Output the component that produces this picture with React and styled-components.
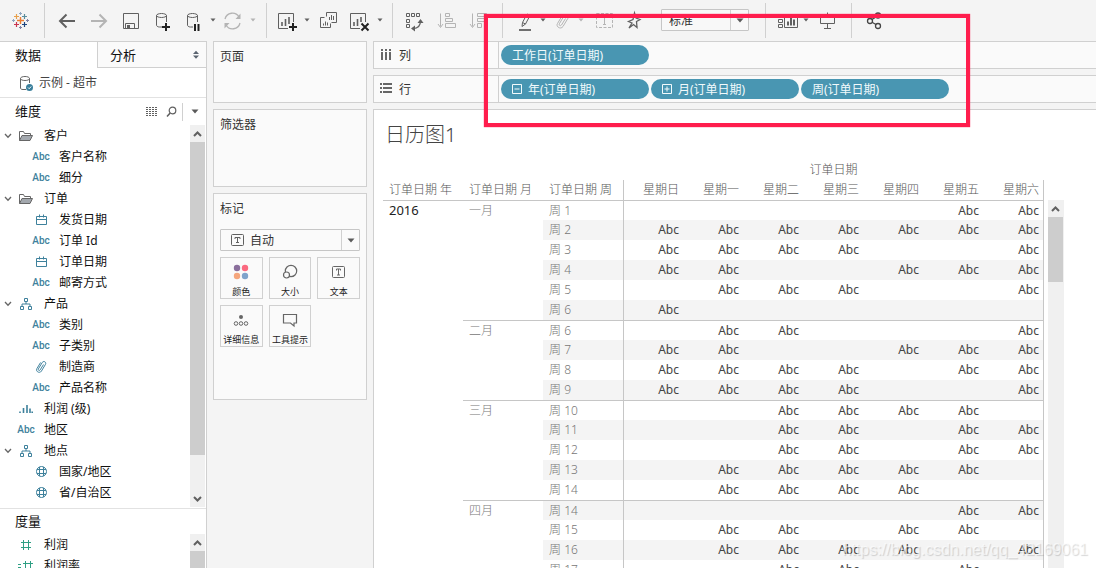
import React, { useState } from "react";
import styled, { createGlobalStyle, ThemeProvider } from "styled-components";

const theme = {
  colors: {
    bar: "#f4f4f4",
    card: "#fafafa",
    line: "#d0d0d0",
    tableLine: "#c6c6c6",
    icon: "#606060",
    muted: "#b4b4b4",
    text: "#333333",
    blue: "#3e819c",
    green: "#2f9f84",
    pill: "#4996b2",
    mark: "#ff1d4d",
  },
};

const GlobalStyle = createGlobalStyle`
  * {
    box-sizing: border-box;
  }
  body {
    margin: 0;
    font-family: "Noto Sans", "Noto Sans CJK SC", sans-serif;
    font-size: 12px;
    color: #333;
  }
  button, select {
    font: inherit;
    color: inherit;
  }
`;

const Page = styled.div`
  position: relative;
  display: flex;
  flex-direction: column;
  height: 100vh;
  overflow: hidden;
  background: ${(props) => props.theme.colors.bar};
`;

/* ---------- toolbar ---------- */

const Toolbar = styled.header`
  flex: none;
  display: flex;
  align-items: center;
  height: 41px;
  padding-bottom: 1px;
`;

const LogoBox = styled.div`
  flex: none;
  display: flex;
  justify-content: center;
  width: 44px;
  padding-right: 2px;
`;

const ToolGroup = styled.div`
  flex: none;
  display: flex;
  align-items: center;
  height: 35px;
  padding: 0 7px 0 6px;
  border-left: 1px solid ${(props) => props.theme.colors.line};
`;

const ToolButton = styled.button`
  flex: none;
  display: flex;
  justify-content: center;
  align-items: center;
  width: ${(props) => props.$w || 32}px;
  height: 32px;
  padding: 0;
  border: none;
  background: none;
  color: ${(props) =>
    props.disabled ? props.theme.colors.muted : props.theme.colors.icon};
`;

const SelectWrap = styled.div`
  position: relative;
  flex: none;
  display: flex;
  width: ${(props) => props.$w || "100%"};
  height: 22px;
  margin: ${(props) => props.$margin || 0};
`;

const SelectBox = styled.select`
  flex: 1;
  min-width: 0;
  height: 22px;
  padding: 0 20px 0 ${(props) => props.$pad || 7}px;
  appearance: none;
  border: 1px solid ${(props) => props.theme.colors.tableLine};
  border-radius: 1px;
  background: ${(props) => props.$bg || "#f8f8f8"};
`;

const SelectArrow = styled.span`
  position: absolute;
  top: 1px;
  right: 1px;
  display: flex;
  justify-content: center;
  align-items: center;
  width: 18px;
  height: 20px;
  border-left: 1px solid ${(props) => props.theme.colors.line};
  pointer-events: none;
`;

const SelectIcon = styled.span`
  position: absolute;
  top: 4px;
  left: 11px;
  display: flex;
  color: ${(props) => props.theme.colors.icon};
  pointer-events: none;
`;

/* ---------- workspace ---------- */

const Workspace = styled.div`
  flex: 1;
  display: flex;
  min-height: 0;
`;

const DataPane = styled.aside`
  flex: none;
  display: flex;
  flex-direction: column;
  width: 207px;
  overflow: hidden;
  background: #fff;
  border-top: 1px solid ${(props) => props.theme.colors.line};
  border-right: 1px solid ${(props) => props.theme.colors.line};
  color: #111;
`;

const Tabs = styled.div`
  flex: none;
  display: flex;
  height: 26px;
`;

const Tab = styled.button`
  display: flex;
  align-items: center;
  justify-content: space-between;
  flex: ${(props) => (props.$active ? "0 0 97px" : "1")};
  padding: 0 6px 0 ${(props) => (props.$active ? 15 : 12)}px;
  border: none;
  border-left: ${(props) => (props.$active ? 0 : 1)}px solid
    ${(props) => props.theme.colors.line};
  border-bottom: 1px solid
    ${(props) => (props.$active ? "#fff" : props.theme.colors.line)};
  background: ${(props) => (props.$active ? "#fff" : "#fafafa")};
  font-size: 13px;
  color: #111;
`;

const SourceRow = styled.div`
  flex: none;
  display: flex;
  align-items: center;
  gap: 5px;
  height: 30px;
  padding-left: 18px;
  border-bottom: 1px solid #e2e2e2;
  color: #444;
`;

const Name = styled.span`
  padding-bottom: 2px;
`;

const SectionHead = styled.div`
  flex: none;
  display: flex;
  align-items: center;
  height: ${(props) => props.$h}px;
  padding-left: 15px;
  border-top: ${(props) => (props.$line ? "1px solid #e2e2e2" : "none")};
`;

const SectionTitle = styled.h2`
  flex: 1;
  margin: 0;
  padding-bottom: 2px;
  font-size: 13px;
  font-weight: 400;
`;

const HeadButton = styled(ToolButton)`
  height: 18px;
  border-left: ${(props) => (props.$divided ? 1 : 0)}px solid
    ${(props) => props.theme.colors.line};
`;

const TreeWrap = styled.div`
  flex: none;
  display: flex;
  padding-right: 1px;
`;

const Tree = styled.ul`
  flex: 1;
  margin: 0;
  padding: 0 0 ${(props) => props.$bottom || 0}px;
  list-style: none;
`;

const TreeRow = styled.li`
  display: flex;
  align-items: center;
  height: 21px;
  padding-left: ${(props) => props.$level * 15}px;
`;

const Chevron = styled.button`
  display: flex;
  justify-content: center;
  width: 16px;
  padding: 0;
  border: none;
  background: none;
  visibility: ${(props) => (props.$show ? "visible" : "hidden")};
`;

const FieldIcon = styled.span`
  display: flex;
  justify-content: center;
  width: 20px;
  margin-right: 8px;
  font-family: Roboto, sans-serif;
  font-size: 10px;
  font-weight: 500;
  color: ${(props) => props.theme.colors[props.$tone || "blue"]};
`;

const ScrollTrack = styled.div`
  flex: none;
  display: flex;
  flex-direction: column;
  width: ${(props) => props.$w || 15}px;
  margin: ${(props) => props.$margin || 0};
  overflow: hidden;
  background: #f0f0f0;
`;

const ScrollButton = styled.button`
  flex: none;
  display: flex;
  justify-content: center;
  align-items: center;
  width: 15px;
  height: 17px;
  margin-top: ${(props) => (props.$end ? "auto" : 0)};
  padding: 0;
  border: none;
  background: none;
`;

const ScrollThumb = styled.div`
  flex: none;
  width: 15px;
  height: ${(props) => props.$h}px;
  background: #cdcdcd;
`;

/* ---------- cards ---------- */

const CardColumn = styled.div`
  flex: none;
  display: flex;
  flex-direction: column;
  gap: 6px;
  width: 154px;
  margin: 0 6px;
`;

const Card = styled.section`
  min-height: ${(props) => props.$h}px;
  padding: 0 6px;
  background: ${(props) => props.theme.colors.card};
  border: 1px solid ${(props) => props.theme.colors.line};
`;

const CardTitle = styled.h3`
  margin: 0;
  font-size: 12px;
  font-weight: 400;
  line-height: 30px;
`;

const MarkGrid = styled.div`
  display: grid;
  grid-template-columns: repeat(3, 1fr);
  gap: 6px;
`;

const MarkButton = styled.button`
  display: flex;
  flex-direction: column;
  align-items: center;
  justify-content: space-between;
  height: 42px;
  padding: 1px 0 0;
  background: ${(props) => props.theme.colors.card};
  border: 1px solid ${(props) => props.theme.colors.line};
  font-size: 9px;
  line-height: 13px;
  white-space: nowrap;
  color: #222;
`;

/* ---------- shelves and view ---------- */

const MainColumn = styled.main`
  flex: 1;
  display: flex;
  flex-direction: column;
  gap: 6px;
  min-width: 0;
`;

const Shelf = styled.div`
  flex: none;
  display: flex;
  height: 28px;
  background: ${(props) => props.theme.colors.card};
  border: 1px solid ${(props) => props.theme.colors.line};
  border-right: none;
`;

const ShelfLabel = styled.div`
  flex: none;
  display: flex;
  align-items: center;
  gap: 7px;
  width: 125px;
  padding-left: 6px;
  border-right: 1px solid ${(props) => props.theme.colors.line};
`;

const Pills = styled.div`
  display: flex;
  align-items: center;
  gap: 2px;
  padding-left: 2px;
`;

const Pill = styled.button`
  display: flex;
  align-items: center;
  gap: 6px;
  width: 148px;
  height: 20px;
  padding: 0 11px;
  border: none;
  border-radius: 10px;
  background: ${(props) => props.theme.colors.pill};
  color: #f2fafc;
`;

const View = styled.section`
  flex: 1;
  display: flex;
  flex-direction: column;
  min-height: 0;
  padding-left: 9px;
  overflow: hidden;
  background: #fff;
  border: 1px solid ${(props) => props.theme.colors.line};
  border-width: 1px 0 0 1px;
`;

const ViewTitle = styled.h1`
  flex: none;
  margin: 0;
  padding-left: 2px;
  font-size: 20px;
  font-weight: 300;
  line-height: 50px;
  color: #444;
`;

const SheetArea = styled.div`
  flex: 1;
  display: flex;
  min-height: 0;
`;

const Sheet = styled.table`
  flex: none;
  align-self: flex-start;
  width: 661px;
  table-layout: fixed;
  border-spacing: 0;
  font-weight: 300;
`;

const HeadCell = styled.th`
  height: 20px;
  padding: 0 ${(props) => (props.$align === "right" ? 4 : 0)}px 0
    ${(props) => (props.$align ? 0 : 6)}px;
  text-align: ${(props) => props.$align || "left"};
  font-weight: 300;
  line-height: 20px;
  white-space: nowrap;
  color: #555;
  border: 0 solid ${(props) => props.theme.colors.tableLine};
  border-left-width: ${(props) => (props.$left ? 1 : 0)}px;
  border-right-width: ${(props) => (props.$right ? 1 : 0)}px;
`;

const RowHead = styled(HeadCell)`
  vertical-align: top;
  line-height: ${(props) => (props.$top ? 19 : 20)}px;
  color: ${(props) => (props.$strong ? "#222" : "#777")};
  font-size: ${(props) => (props.$strong ? 13 : 12)}px;
  font-weight: ${(props) => (props.$strong ? 400 : 300)};
  border-top-width: ${(props) => (props.$top ? 1 : 0)}px;
  background: ${(props) => (props.$shade ? "#f4f4f4" : "#fff")};
`;

const Cell = styled.td`
  height: 20px;
  padding: 0 4px 0 0;
  text-align: right;
  font-weight: 400;
  line-height: ${(props) => (props.$top ? 19 : 20)}px;
  color: #444;
  background: ${(props) => (props.$shade ? "#f4f4f4" : "#fff")};
  border: 0 solid ${(props) => props.theme.colors.tableLine};
  border-top-width: ${(props) => (props.$top ? 1 : 0)}px;
  border-left-width: ${(props) => (props.$left ? 1 : 0)}px;
  border-right-width: ${(props) => (props.$right ? 1 : 0)}px;
`;

// 标注框，盖在工具栏和功能区上面
const Callout = styled.div`
  position: absolute;
  top: 14px;
  left: 484px;
  width: 486px;
  height: 113px;
  border: 4px solid ${(props) => props.theme.colors.mark};
  box-shadow: 0 0 1px ${(props) => props.theme.colors.mark};
  pointer-events: none;
`;

const Watermark = styled.div`
  position: absolute;
  right: 8px;
  bottom: 8px;
  font-family: "Liberation Sans", sans-serif;
  font-size: 16px;
  line-height: 20px;
  color: rgba(255, 255, 255, 0.6);
  text-shadow: 1px 1px 1px rgba(0, 0, 0, 0.16);
  pointer-events: none;
`;

/* ---------- icons ---------- */

const Svg = ({ size = 24, w, h, children, ...rest }) => (
  <svg
    width={w || size}
    height={h || size}
    viewBox={`0 0 ${w || size} ${h || size}`}
    fill="none"
    stroke="currentColor"
    strokeWidth="1"
    aria-hidden="true"
    {...rest}
  >
    {children}
  </svg>
);

const plus = (x, y, s) => `M${x - s} ${y}h${s * 2}M${x} ${y - s}v${s * 2}`;

const Logo = () => (
  <Svg>
    <path d={plus(11.5, 12.5, 3.5)} stroke="#eb7b30" strokeWidth="1.4" />
    <path d={plus(7.5, 8.5, 2.5)} stroke="#e8a04a" strokeWidth="1.2" />
    <path d={plus(15.5, 8.5, 2.5)} stroke="#5b8d9c" strokeWidth="1.2" />
    <path d={plus(7.5, 16.5, 2.5)} stroke="#c8354f" strokeWidth="1.2" />
    <path d={plus(15.5, 16.5, 2.5)} stroke="#1f447e" strokeWidth="1.2" />
    <path d={plus(11.5, 5.5, 1.5) + plus(4.5, 12.5, 1.5)} stroke="#8ea6c0" />
    <path d={plus(11.5, 19.5, 1.5) + plus(18.5, 12.5, 1.5)} stroke="#8082a6" />
  </Svg>
);

const Caret = () => (
  <Svg w={6} h={4} stroke="none" fill="currentColor">
    <path d="M0.500 0.500h5L3 3.600z" />
  </Svg>
);

const BigCaret = () => (
  <Svg w={8} h={5} stroke="none" fill="#5a5a5a">
    <path d="M0.500 0.500h7L4 4.600z" />
  </Svg>
);

const Back = () => (
  <Svg strokeWidth="2">
    <path d="M20 13H5M11.500 6.500L5 13l6.500 6.500" />
  </Svg>
);

const Forward = () => (
  <Svg strokeWidth="2">
    <path d="M4 13h15M12.500 6.500L19 13l-6.500 6.500" />
  </Svg>
);

const Save = () => (
  <Svg>
    <path d="M4.500 5.500h15v15h-15zM6.500 20.500v-5h9v5" />
    <path d="M8 17h3v3.500H8z" fill="currentColor" stroke="none" />
  </Svg>
);

const cylinder =
  "M11 19H8.500C6.500 19 5.500 18 5.500 17V7.500C5.500 6.300 8 5.500 10.500 5.500S15.500 6.300 15.500 7.500V14M5.500 7.500c0 1.200 2.500 2 5 2s5-.8 5-2";

const AddSource = () => (
  <Svg>
    <path d={cylinder} />
    <path d={plus(15, 19, 4)} stroke="#222" strokeWidth="2" />
  </Svg>
);

const PauseSource = () => (
  <Svg>
    <path d={cylinder} />
    <path d="M13 16v7M16.500 16v7" stroke="#222" strokeWidth="2" />
  </Svg>
);

const Refresh = () => (
  <Svg strokeWidth="1.300">
    <path d="M5 11a7.600 7.600 0 0 1 14-2M20 15a7.600 7.600 0 0 1-14 2" />
    <path
      d="M20.500 5.500v5.500h-5zM4.500 20.500V15h5z"
      fill="currentColor"
      stroke="none"
    />
  </Svg>
);

const sheetShape = "M13 20.500H3.500v-15h15V14";

const NewSheet = () => (
  <Svg>
    <path d={sheetShape} />
    <path d="M7 18v-4M10.500 18v-7M14 16v-7" strokeWidth="1.600" />
    <path d={plus(18, 19, 4)} stroke="#222" strokeWidth="2" />
  </Svg>
);

const Duplicate = () => (
  <Svg>
    <path d="M10.500 8.500v-4h10v10h-5M8.500 9.500h-4v10h10v-4" />
    <path d="M13.500 12v-3M15.500 12V7M17.500 12V8M7.500 17.500v-2M9.500 17.500v-4M11.500 17.500v-3" />
  </Svg>
);

const ClearSheet = () => (
  <Svg>
    <path d={sheetShape} />
    <path d="M7 18v-4M10.500 18v-7M14 14V9" strokeWidth="1.600" />
    <path d="M14.500 15.500l7 7M21.500 15.500l-7 7" stroke="#222" strokeWidth="2" />
  </Svg>
);

const Swap = () => (
  <Svg>
    <path d="M3.500 5.500h3v3h-3zM8.500 5.500h3v3h-3zM13.500 5.500h3v3h-3zM3.500 11.500h3v3h-3zM3.500 16.500h3v3h-3z" />
    <path d="M10 20.500c5 0 7.500-3 7.500-8" strokeWidth="1.300" />
    <path
      d="M17.500 11l3 4h-6zM8 20.500l4-3v6z"
      fill="currentColor"
      stroke="none"
    />
  </Svg>
);

const SortAsc = () => (
  <Svg>
    <path d="M5.500 5.500v13M3 16l2.500 3.500L8 16M10.500 5.500h4v3h-4zM10.500 10.500h7v3h-7zM10.500 15.500h10v4h-10z" />
  </Svg>
);

const SortDesc = () => (
  <Svg>
    <path d="M5.500 5.500v13M3 16l2.500 3.500L8 16M10.500 5.500h9v3h-9zM10.500 10.500h7v3h-7zM10.500 15.500h4v4h-4z" />
  </Svg>
);

const Pen = () => (
  <Svg>
    <path d="M7 22h12" strokeWidth="1.800" />
    <path d="M10 18.500l.5-4L15 6l3 1.500-4.500 8.500zM10.500 14.500l3 1.500M14 8l3 1.500" />
  </Svg>
);

const clipShape =
  "M15.500 10.500l-4 6.500c-1 1.500-3 .3-2.200-1.200L14 8c1.500-2.500 5.500-.5 4 2.200l-5 8.300c-2 3.300-7.500.5-5.500-3L12 8";

const Clip = () => (
  <Svg>
    <path d={clipShape} />
  </Svg>
);

const LabelText = () => (
  <Svg>
    <path d="M5.500 5.500h16v14h-16z" strokeDasharray="3 1.500" />
    <path d="M10.500 10V8.500h6V10M13.500 8.500v8M12 16.500h3" />
  </Svg>
);

const Pin = () => (
  <Svg strokeWidth="1.300">
    <path d="M13.500 5l1.500 5 4 1.500-3.500 2 .5 6-3.500-3L8 20l3-5-3.500-1.500 4.500-2z" />
  </Svg>
);

const ShowMe = () => (
  <Svg>
    <path d="M3.500 6.500h4v3h-4zM3.500 11.500h4v3h-4zM3.500 16.500h4v3h-4zM9.500 6.500h13v13h-13z" />
    <path d="M13 17.500v-4M16 17.500V10M19 17.500v-6" strokeWidth="2" />
  </Svg>
);

const Present = () => (
  <Svg>
    <path d="M12.500 4.500v2M5 6.500h15M5.500 6.500v9h14v-9M12.500 15.500v5M9 20.500h7" />
  </Svg>
);

const Share = () => (
  <Svg stroke="#444" strokeWidth="1.300">
    <circle cx="8" cy="13" r="2.500" />
    <circle cx="16" cy="7.500" r="2.500" />
    <circle cx="16" cy="18" r="2.500" />
    <path d="M10 11.500l4-2.600M10 14.300l4 2.200" />
  </Svg>
);

const TextBoxIcon = () => (
  <Svg w={13} h={13}>
    <rect x="0.500" y="1.500" width="12" height="11" rx="1" />
    <path d="M4 6V4.500h5V6M6.500 4.500v5M5 9.500h3" />
  </Svg>
);

const SourceIcon = () => (
  <Svg size={16} stroke="#666">
    <path d="M8 14.500H5C3.500 14.500 2.500 14 2.500 13V3.500c0-1.200 2-2 4.500-2s4.500.8 4.500 2V8M2.500 3.500c0 1.200 2 2 4.500 2s4.500-.8 4.500-2" />
    <circle cx="11.500" cy="12.500" r="3.500" fill="#3a7f9b" stroke="none" />
    <path d="M10 12.500l1.200 1.200 2-2.200" stroke="#fff" />
  </Svg>
);

const SortArrows = () => (
  <Svg w={8} h={10} stroke="none" fill="#5b6470">
    <path d="M1 4L4 .8 7 4zM1 5.500h6L4 8.700z" />
  </Svg>
);

const GridIcon = () => (
  <Svg w={12} h={9}>
    <path
      d="M0 .5h12M0 2.500h12M0 4.500h12M0 6.500h12M0 8.500h12"
      strokeDasharray="2 1"
    />
  </Svg>
);

const SearchIcon = () => (
  <Svg size={12}>
    <circle cx="6.500" cy="4.500" r="3.300" strokeWidth="1.200" />
    <path d="M4.200 7L1 10.500" strokeWidth="1.600" />
  </Svg>
);

const ChevronIcon = () => (
  <Svg w={8} h={6} stroke="#666" strokeWidth="1.300">
    <path d="M1 1l3 3.300L7 1" />
  </Svg>
);

const ScrollArrow = ({ down }) => (
  <Svg w={9} h={6} stroke="#606060" strokeWidth="2">
    <path d={down ? "M1 1l3.500 3.500L8 1" : "M1 5l3.500-3.500L8 5"} />
  </Svg>
);

const fieldIcons = {
  folder: (
    <Svg w={16} h={12} stroke="#666">
      <path d="M1.500 10.500v-9h4l1 2h6v2" />
      <path d="M4 5.500h10.500l-2.500 5H1.500z" fill="#a3a8ae" />
    </Svg>
  ),
  date: (
    <Svg w={11} h={11}>
      <path d="M.5 2.500h10v8H.5zM.5 5.500h10M3.500 .5v3M7.500 .5v3" />
    </Svg>
  ),
  hierarchy: (
    <Svg w={12} h={12}>
      <path d="M4.500 .5h3v3h-3zM.5 8.500h3v3h-3zM8.500 8.500h3v3h-3zM6 3.500V6M2 8.500V6h8v2.500" />
    </Svg>
  ),
  clip: (
    <Svg w={14} h={14} viewBox="4 5 17 17" strokeWidth="1.200">
      <path d={clipShape} />
    </Svg>
  ),
  bins: (
    <Svg w={14} h={10} strokeWidth="1.600">
      <path d="M1 7.500V9M4.500 4v5M8 1v8M11 4.500V9M13.200 7.500V9" />
    </Svg>
  ),
  geo: (
    <Svg w={11} h={11}>
      <circle cx="5.500" cy="5.500" r="5" />
      <path d="M1 3.500h9M1 7.500h9M3.500 1v9M7.500 1v9" />
    </Svg>
  ),
  number: (
    <Svg w={12} h={12}>
      <path d="M3.500 1v10M8.500 1v10M1 3.500h10M1 8.500h10" />
    </Svg>
  ),
  calc: (
    <Svg w={16} h={12}>
      <path d="M7.500 1v10M12.500 1v10M5 3.500h10M5 8.500h10M0 4.500h3M0 7.500h3" />
    </Svg>
  ),
  text: "Abc",
};

const ColumnsIcon = () => (
  <Svg w={12} h={14} stroke="#666" strokeWidth="2">
    <path d="M2 1v2M6 1v2M10 1v2M2 4v8M6 4v8M10 4v8" />
  </Svg>
);

const RowsIcon = () => (
  <Svg w={12} h={14} stroke="#666" strokeWidth="2">
    <path d="M0 2h2M0 6h2M0 10h2M3 2h9M3 6h9M3 10h9" />
  </Svg>
);

const ExpandIcon = ({ open }) => (
  <Svg size={10}>
    <path d={`M.5 .5h9v9h-9zM2.500 5h5${open ? "" : "M5 2.500v5"}`} />
  </Svg>
);

const markIcons = {
  color: (
    <Svg stroke="none">
      <circle cx="8" cy="9" r="3.200" fill="#8a6f9c" />
      <circle cx="16" cy="9" r="3.200" fill="#fb6a80" />
      <circle cx="8" cy="17" r="3.200" fill="#f5a67d" />
      <circle cx="16" cy="17" r="3.200" fill="#7ea3cb" />
    </Svg>
  ),
  size: (
    <Svg stroke="#666" strokeWidth="1.200">
      <circle cx="13" cy="12" r="5.700" />
      <circle cx="8.500" cy="16" r="3" fill="#fafafa" />
    </Svg>
  ),
  text: (
    <Svg stroke="#666">
      <rect x="5.500" y="7.500" width="12" height="11" rx="1" />
      <path d="M9.500 11.500v-1.500h4v1.500M11.500 10v6M10 16h3" />
    </Svg>
  ),
  detail: (
    <Svg stroke="#666">
      <circle cx="12" cy="10" r="2" fill="#666" stroke="none" />
      <circle cx="7" cy="16.500" r="1.800" />
      <circle cx="12" cy="16.500" r="1.800" />
      <circle cx="17" cy="16.500" r="1.800" />
    </Svg>
  ),
  tooltip: (
    <Svg stroke="#666" strokeWidth="1.200">
      <path d="M5.500 7.500h13v8.500H16v3l-3.500-3h-7z" />
    </Svg>
  ),
};

/* ---------- data ---------- */

const dimensions = [
  { name: "客户", icon: "folder", level: 0, open: true },
  { name: "客户名称", icon: "text", level: 1 },
  { name: "细分", icon: "text", level: 1 },
  { name: "订单", icon: "folder", level: 0, open: true },
  { name: "发货日期", icon: "date", level: 1 },
  { name: "订单 Id", icon: "text", level: 1 },
  { name: "订单日期", icon: "date", level: 1 },
  { name: "邮寄方式", icon: "text", level: 1 },
  { name: "产品", icon: "hierarchy", level: 0, open: true },
  { name: "类别", icon: "text", level: 1 },
  { name: "子类别", icon: "text", level: 1 },
  { name: "制造商", icon: "clip", level: 1 },
  { name: "产品名称", icon: "text", level: 1 },
  { name: "利润 (级)", icon: "bins", level: 0 },
  { name: "地区", icon: "text", level: 0 },
  { name: "地点", icon: "hierarchy", level: 0, open: true },
  { name: "国家/地区", icon: "geo", level: 1 },
  { name: "省/自治区", icon: "geo", level: 1 },
];

const measures = [
  { name: "利润", icon: "number", level: 0 },
  { name: "利润率", icon: "calc", level: 0 },
];

const marks = [
  { name: "颜色", icon: "color" },
  { name: "大小", icon: "size" },
  { name: "文本", icon: "text" },
  { name: "详细信息", icon: "detail" },
  { name: "工具提示", icon: "tooltip" },
];

const weekdays = ["日", "一", "二", "三", "四", "五", "六"];

// 每周一串，周日到周六，1 表示当天有订单
const months = [
  {
    name: "一月",
    weeks: [
      [1, "0000011"],
      [2, "1111111"],
      [3, "1111001"],
      [4, "1100111"],
      [5, "0111001"],
      [6, "1000000"],
    ],
  },
  {
    name: "二月",
    weeks: [
      [6, "0110001"],
      [7, "1100111"],
      [8, "1111011"],
      [9, "1111001"],
    ],
  },
  {
    name: "三月",
    weeks: [
      [10, "0011110"],
      [11, "0011011"],
      [12, "0011011"],
      [13, "0111110"],
      [14, "0111100"],
    ],
  },
  {
    name: "四月",
    weeks: [
      [14, "0000011"],
      [15, "0110110"],
      [16, "0111101"],
      [17, "0011010"],
    ],
  },
];

const rows = months.flatMap((month) =>
  month.weeks.map(([week, days], i) => ({
    week,
    days: days.split(""),
    first: i === 0,
    month: month.name,
    span: month.weeks.length,
  }))
);

/* ---------- parts ---------- */

const Tool = ({ label, icon: Icon, ...rest }) => (
  <ToolButton type="button" aria-label={label} {...rest}>
    <Icon />
  </ToolButton>
);

const FieldTree = ({ fields, tone, bottom }) => (
  <Tree $bottom={bottom}>
    {fields.map((field) => (
      <TreeRow key={field.name} $level={field.level}>
        <Chevron type="button" aria-label={field.name} $show={field.open}>
          <ChevronIcon />
        </Chevron>
        <FieldIcon $tone={tone}>{fieldIcons[field.icon]}</FieldIcon>
        <Name>{field.name}</Name>
      </TreeRow>
    ))}
  </Tree>
);

const CalendarTable = () => (
  <Sheet>
    <colgroup>
      <col width="80" />
      <col width="80" />
      <col width="80" />
      {weekdays.map((day, i) => (
        <col key={day} width={i === 6 ? "61" : "60"} />
      ))}
    </colgroup>
    <thead>
      <tr>
        <HeadCell as="td" colSpan={3} />
        <HeadCell colSpan={7} $align="center">
          订单日期
        </HeadCell>
      </tr>
      <tr>
        <HeadCell>订单日期 年</HeadCell>
        <HeadCell>订单日期 月</HeadCell>
        <HeadCell>订单日期 周</HeadCell>
        {weekdays.map((day, i) => (
          <HeadCell key={day} $align="right" $left={i === 0} $right={i === 6}>
            星期{day}
          </HeadCell>
        ))}
      </tr>
    </thead>
    <tbody>
      {rows.map((row, r) => (
        <tr key={r}>
          {r === 0 && (
            <RowHead rowSpan={rows.length} $top $strong>
              2016
            </RowHead>
          )}
          {row.first && (
            <RowHead rowSpan={row.span} $top>
              {row.month}
            </RowHead>
          )}
          <RowHead $top={row.first} $shade={r % 2 === 1}>
            周 {row.week}
          </RowHead>
          {row.days.map((day, i) => (
            <Cell
              key={i}
              $top={row.first}
              $shade={r % 2 === 1}
              $left={i === 0}
              $right={i === 6}
            >
              {day === "1" ? "Abc" : ""}
            </Cell>
          ))}
        </tr>
      ))}
    </tbody>
  </Sheet>
);

const App = () => {
  const [tab, setTab] = useState("data");

  return (
    <ThemeProvider theme={theme}>
      <GlobalStyle />
      <Page>
        <Toolbar>
          <LogoBox>
            <Logo />
          </LogoBox>
          <ToolGroup>
            <Tool label="撤消" icon={Back} />
            <Tool label="重做" icon={Forward} disabled />
            <Tool label="保存" icon={Save} />
            <Tool label="新建数据源" icon={AddSource} />
            <Tool label="暂停自动更新" icon={PauseSource} $w={30} />
            <Tool label="更新选项" icon={Caret} $w={8} />
            <Tool label="运行更新" icon={Refresh} $w={30} disabled />
            <Tool label="运行选项" icon={Caret} $w={12} disabled />
          </ToolGroup>
          <ToolGroup>
            <Tool label="新建工作表" icon={NewSheet} $w={28} />
            <Tool label="新建选项" icon={Caret} $w={12} />
            <Tool label="复制工作表" icon={Duplicate} $w={30} />
            <Tool label="清除工作表" icon={ClearSheet} />
            <Tool label="清除选项" icon={Caret} $w={10} />
          </ToolGroup>
          <ToolGroup>
            <Tool label="交换行和列" icon={Swap} />
            <Tool label="升序排序" icon={SortAsc} disabled />
            <Tool label="降序排序" icon={SortDesc} disabled />
          </ToolGroup>
          <ToolGroup>
            <Tool label="突出显示" icon={Pen} $w={30} />
            <Tool label="突出显示选项" icon={Caret} $w={8} />
            <Tool label="组成员" icon={Clip} $w={30} disabled />
            <Tool label="组选项" icon={Caret} $w={8} disabled />
            <Tool label="显示标记标签" icon={LabelText} $w={36} disabled />
            <Tool label="固定轴" icon={Pin} $w={24} />
            <SelectWrap $w="88px" $margin="0 9px 0 16px">
              <SelectBox aria-label="适合">
                <option>标准</option>
              </SelectBox>
              <SelectArrow>
                <BigCaret />
              </SelectArrow>
            </SelectWrap>
          </ToolGroup>
          <ToolGroup>
            <Tool label="显示卡" icon={ShowMe} $w={30} />
            <Tool label="显示卡选项" icon={Caret} $w={8} />
            <Tool label="演示模式" icon={Present} $w={34} />
          </ToolGroup>
          <ToolGroup>
            <Tool label="共享" icon={Share} />
          </ToolGroup>
        </Toolbar>

        <Workspace>
          <DataPane>
            <Tabs>
              <Tab
                type="button"
                $active={tab === "data"}
                onClick={() => setTab("data")}
              >
                数据
              </Tab>
              <Tab
                type="button"
                $active={tab === "analysis"}
                onClick={() => setTab("analysis")}
              >
                分析
                <SortArrows />
              </Tab>
            </Tabs>
            <SourceRow>
              <SourceIcon />
              <Name>示例 - 超市</Name>
            </SourceRow>
            <SectionHead $h={27}>
              <SectionTitle>维度</SectionTitle>
              <HeadButton type="button" aria-label="查看数据" $w={20}>
                <GridIcon />
              </HeadButton>
              <HeadButton type="button" aria-label="查找字段" $w={20}>
                <SearchIcon />
              </HeadButton>
              <HeadButton type="button" aria-label="字段菜单" $w={24} $divided>
                <BigCaret />
              </HeadButton>
            </SectionHead>
            <TreeWrap>
              <FieldTree fields={dimensions} bottom={5} />
              <ScrollTrack $margin="0 0 1px">
                <ScrollButton type="button" aria-label="向上滚动">
                  <ScrollArrow />
                </ScrollButton>
                <ScrollThumb $h={313} />
                <ScrollButton type="button" aria-label="向下滚动" $end>
                  <ScrollArrow down />
                </ScrollButton>
              </ScrollTrack>
            </TreeWrap>
            <SectionHead $h={26} $line>
              <SectionTitle>度量</SectionTitle>
            </SectionHead>
            <TreeWrap>
              <FieldTree fields={measures} tone="green" />
              <ScrollTrack>
                <ScrollButton type="button" aria-label="向上滚动">
                  <ScrollArrow />
                </ScrollButton>
                <ScrollThumb $h={40} />
              </ScrollTrack>
            </TreeWrap>
          </DataPane>

          <CardColumn>
            <Card $h={62}>
              <CardTitle>页面</CardTitle>
            </Card>
            <Card $h={78}>
              <CardTitle>筛选器</CardTitle>
            </Card>
            <Card $h={207}>
              <CardTitle>标记</CardTitle>
              <SelectWrap $margin="5px 0 6px">
                <SelectBox aria-label="标记类型" $pad={29} $bg="#fafafa">
                  <option>自动</option>
                </SelectBox>
                <SelectIcon>
                  <TextBoxIcon />
                </SelectIcon>
                <SelectArrow>
                  <BigCaret />
                </SelectArrow>
              </SelectWrap>
              <MarkGrid>
                {marks.map((mark) => (
                  <MarkButton key={mark.name} type="button">
                    {markIcons[mark.icon]}
                    {mark.name}
                  </MarkButton>
                ))}
              </MarkGrid>
            </Card>
          </CardColumn>

          <MainColumn>
            <Shelf>
              <ShelfLabel>
                <ColumnsIcon />列
              </ShelfLabel>
              <Pills>
                <Pill type="button">工作日(订单日期)</Pill>
              </Pills>
            </Shelf>
            <Shelf>
              <ShelfLabel>
                <RowsIcon />行
              </ShelfLabel>
              <Pills>
                <Pill type="button">
                  <ExpandIcon open />
                  年(订单日期)
                </Pill>
                <Pill type="button">
                  <ExpandIcon />
                  月(订单日期)
                </Pill>
                <Pill type="button">周(订单日期)</Pill>
              </Pills>
            </Shelf>
            <View>
              <ViewTitle>日历图1</ViewTitle>
              <SheetArea>
                <CalendarTable />
                <ScrollTrack $w={16} $margin="40px 0 0 4px">
                  <ScrollButton type="button" aria-label="向上滚动">
                    <ScrollArrow />
                  </ScrollButton>
                  <ScrollThumb $h={65} />
                </ScrollTrack>
              </SheetArea>
            </View>
          </MainColumn>
        </Workspace>

        <Callout />
        <Watermark>https://blog.csdn.net/qq_42169061</Watermark>
      </Page>
    </ThemeProvider>
  );
};

export default App;
